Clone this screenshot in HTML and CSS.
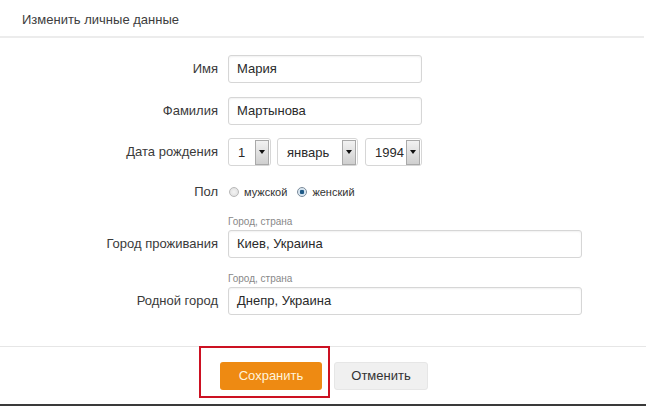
FILE: index.html
```html
<!DOCTYPE html>
<html lang="ru">
<head>
<meta charset="utf-8">
<title>Изменить личные данные</title>
<link rel="stylesheet" href="styles.css">
</head>
<body>
<div class="page">
  <div class="header">Изменить личные данные</div>
  <div class="form">
    <div class="row row-1">
      <div class="label">Имя</div>
      <div class="control"><div class="input w-short">Мария</div></div>
    </div>
    <div class="row row-2">
      <div class="label">Фамилия</div>
      <div class="control"><div class="input w-short">Мартынова</div></div>
    </div>
    <div class="row row-3">
      <div class="label">Дата рождения</div>
      <div class="control selects">
        <div class="select sel-day"><span class="sel-value">1</span><span class="sel-arrow"></span></div>
        <div class="select sel-month"><span class="sel-value">январь</span><span class="sel-arrow"></span></div>
        <div class="select sel-year"><span class="sel-value">1994</span><span class="sel-arrow"></span></div>
      </div>
    </div>
    <div class="row row-4">
      <div class="label">Пол</div>
      <div class="control radios">
        <span class="radio"></span><span class="radio-text">мужской</span>
        <span class="radio checked"></span><span class="radio-text">женский</span>
      </div>
    </div>
    <div class="row row-5 hinted">
      <div class="label">Город проживания</div>
      <div class="control">
        <div class="hint">Город, страна</div>
        <div class="input w-long">Киев, Украина</div>
      </div>
    </div>
    <div class="row row-6 hinted">
      <div class="label">Родной город</div>
      <div class="control">
        <div class="hint">Город, страна</div>
        <div class="input w-long">Днепр, Украина</div>
      </div>
    </div>
  </div>
  <div class="footer">
    <div class="buttons">
      <div class="btn btn-save">Сохранить</div>
      <div class="btn btn-cancel">Отменить</div>
      <div class="highlight"></div>
    </div>
  </div>
  <div class="bottom-line"></div>
</div>
</body>
</html>
```
FILE: styles.css
```css
* { box-sizing: border-box; }
html, body { margin: 0; padding: 0; background: #fff; }
body {
  font-family: "Liberation Sans", Arial, sans-serif;
  font-size: 13px;
  color: #3a3a3a;
}
.page {
  width: 646px;
  height: 406px;
  display: flex;
  flex-direction: column;
  overflow: hidden;
}
.header {
  height: 38px;
  padding-left: 22px;
  line-height: 39px;
  color: #3d3d3d;
  border-bottom: 2px solid #ececec;
  width: 644px;
}
.form {
  display: flex;
  flex-direction: column;
  padding-top: 17px;
  height: 309px;
}
.row {
  display: flex;
  align-items: center;
}
.row.hinted { align-items: flex-end; }
.label {
  box-sizing: content-box;
  width: 218px;
  padding-right: 10px;
  text-align: right;
  color: #3a3a3a;
  line-height: 28px;
  flex: none;
}
.control { display: flex; flex-direction: column; }
.row-2 { margin-top: 14px; }
.row-3 { margin-top: 13px; }
.row-4 { margin-top: 18px; height: 16px; }
.row-5 { margin-top: 16px; }
.row-6 { margin-top: 15px; }
.input {
  height: 28px;
  border: 1px solid #d6d6d6;
  border-radius: 3px;
  box-shadow: inset 0 1px 2px rgba(0,0,0,0.06);
  padding-left: 8px;
  line-height: 26px;
  color: #2a2a2a;
  background: #fff;
}
.w-short { width: 194px; }
.w-long { width: 354px; }
.hint {
  font-size: 10px;
  color: #888;
  line-height: 12px;
  height: 12px;
  margin-bottom: 2px;
}
.selects { flex-direction: row; gap: 6px; }
.select {
  height: 28px;
  border: 1px solid #d6d6d6;
  border-radius: 3px;
  display: flex;
  align-items: center;
  justify-content: space-between;
  padding: 1px 1px 1px 9px;
  color: #2a2a2a;
  background: #fff;
}
.sel-day { width: 43px; }
.sel-month { width: 81px; margin-right: 1px; }
.sel-year { width: 57px; }
.sel-arrow {
  width: 14px;
  height: 25px;
  border: 1px solid #a9a9a9;
  background: linear-gradient(#f2f2f2, #cfcfcf);
  display: flex;
  align-items: center;
  justify-content: center;
}
.sel-arrow::after {
  content: "";
  border-left: 3px solid transparent;
  border-right: 3px solid transparent;
  border-top: 4px solid #111;
}
.radios {
  flex-direction: row;
  align-items: center;
  font-size: 11px;
  padding-left: 1px;
}
.radio {
  width: 10px;
  height: 10px;
  border-radius: 50%;
  border: 1px solid #b8b8b8;
  background: radial-gradient(#f4f4f4, #dcdcdc);
  margin-right: 5px;
}
.radio.checked {
  border-color: #7a8a9a;
  background: radial-gradient(circle, #1f5a87 0 2px, #cfe0ee 2.5px, #eef4f9 5px);
}
.radio-text { margin-right: 10px; color: #333; }
.footer {
  border-top: 1px solid #e6e6e6;
  height: 57px;
  width: 646px;
  padding-top: 15px;
}
.buttons {
  position: relative;
  display: flex;
  gap: 12px;
  padding-left: 220px;
}
.btn {
  height: 28px;
  line-height: 28px;
  text-align: center;
  border-radius: 3px;
  font-size: 13px;
}
.btn-save {
  width: 102px;
  background: #ee8a12;
  color: #fff4dc;
}
.btn-cancel {
  width: 94px;
  background: #f0f0f0;
  border: 1px solid #e6e6e6;
  line-height: 26px;
  color: #333;
}
.highlight {
  position: absolute;
  left: 199px;
  top: -16px;
  width: 131px;
  height: 52px;
  border: 2px solid #cc1122;
}
.bottom-line {
  height: 2px;
  margin-top: 1px;
  background: #3a3a3a;
  width: 646px;
}
```
